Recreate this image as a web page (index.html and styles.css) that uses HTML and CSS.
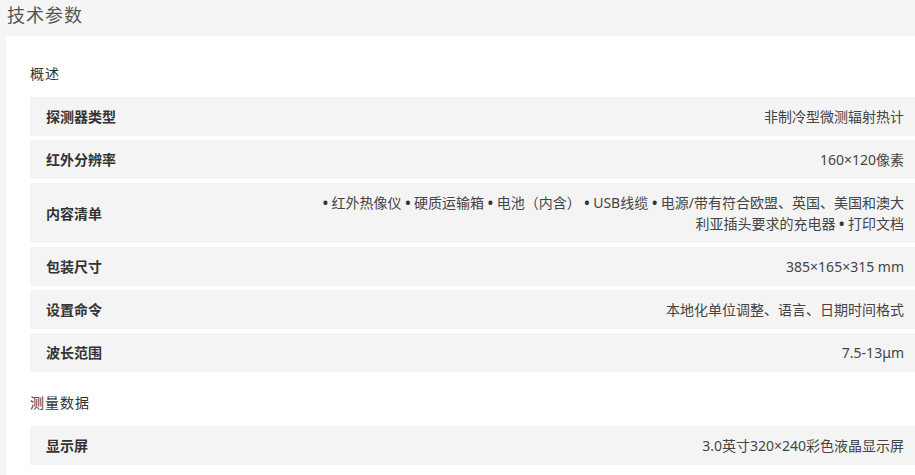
FILE: index.html
```html
<!DOCTYPE html>
<html lang="zh-CN">
<head>
    <meta charset="UTF-8">
    <meta name="viewport" content="width=device-width, initial-scale=1.0">
    <title>技术参数</title>
    <link rel="stylesheet" href="styles.css">
</head>
<body>
    <h1 class="page-title">技术参数</h1>

    <div class="spec-panel">
        <h2 class="spec-group">概述</h2>
        <div class="spec-row">
            <div class="spec-label">探测器类型</div>
            <div class="spec-value">非制冷型微测辐射热计</div>
        </div>
        <div class="spec-row">
            <div class="spec-label">红外分辨率</div>
            <div class="spec-value">160×120像素</div>
        </div>
        <div class="spec-row">
            <div class="spec-label">内容清单</div>
            <div class="spec-value spec-list"><b class="dot">•</b> 红外热像仪 <b class="dot">•</b> 硬质运输箱 <b class="dot">•</b> 电池（内含） <b class="dot">•</b> USB线缆 <b class="dot">•</b> 电源/带有符合欧盟、英国、美国和澳大利亚插头要求的充电器 <b class="dot">•</b> 打印文档</div>
        </div>
        <div class="spec-row">
            <div class="spec-label">包装尺寸</div>
            <div class="spec-value">385×165×315 mm</div>
        </div>
        <div class="spec-row">
            <div class="spec-label">设置命令</div>
            <div class="spec-value">本地化单位调整、语言、日期时间格式</div>
        </div>
        <div class="spec-row">
            <div class="spec-label">波长范围</div>
            <div class="spec-value">7.5-13μm</div>
        </div>

        <h2 class="spec-group">测量数据</h2>
        <div class="spec-row">
            <div class="spec-label">显示屏</div>
            <div class="spec-value">3.0英寸320×240彩色液晶显示屏</div>
        </div>
    </div>
</body>
</html>
```

FILE: styles.css
```css
:root {
    --page-bg: #f5f5f5;
    --panel-bg: #ffffff;
    --row-bg: #f4f4f4;
    --title: #555555;
    --label: #333333;
    --value: #444444;
}

* {
    margin: 0;
    padding: 0;
    box-sizing: border-box;
}

body {
    font-family: "Noto Sans", "Noto Sans CJK SC", sans-serif;
    background: var(--page-bg);
    color: var(--value);
    font-size: 14px;
    overflow: hidden;
}

.page-title {
    font-size: 18px;
    font-weight: 400;
    letter-spacing: 1px;
    line-height: 30px;
    color: var(--title);
    padding-left: 7px;
    margin-bottom: 6px;
}

.spec-panel {
    background: var(--panel-bg);
    margin-left: 6px;
    padding: 27px 0 20px 24px;
}

.spec-group {
    font-size: 14px;
    font-weight: 400;
    letter-spacing: 1px;
    line-height: 21px;
    color: var(--label);
    margin: 20px 0 13px;
}

.spec-group:first-child {
    margin-top: 0;
}

.spec-row {
    display: flex;
    align-items: center;
    justify-content: space-between;
    gap: 20px;
    background: var(--row-bg);
    padding: 9px 11px 9px 16px;
    line-height: 21px;
    margin-bottom: 4px;
}

.spec-label {
    font-weight: 700;
    color: var(--label);
    white-space: nowrap;
}

.spec-value {
    text-align: right;
    color: var(--value);
}

.spec-list {
    max-width: 590px;
}

.dot {
    font-weight: 700;
    color: #333333;
}
```
